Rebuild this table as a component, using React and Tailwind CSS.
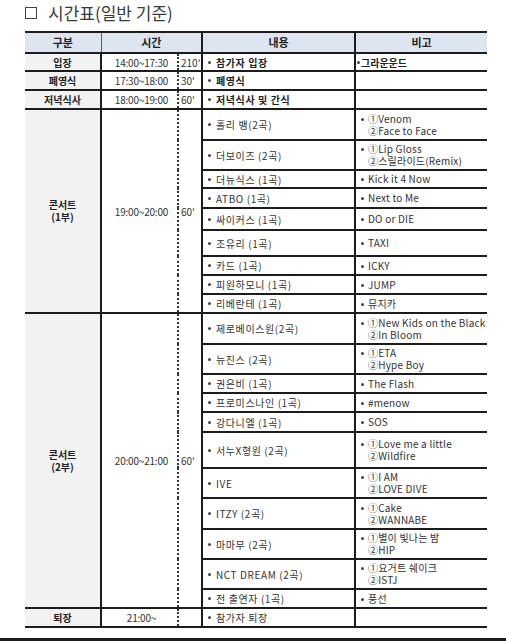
import React from 'react';

const font = { fontFamily: '"Noto Sans CJK KR", "Noto Sans", sans-serif' };

const part1 = [
  { h: 31, who: '홀리 뱅(2곡)', note: ['①Venom', '②Face to Face'] },
  { h: 30, who: '더보이즈 (2곡)', note: ['①Lip Gloss', '②스릴라이드(Remix)'] },
  { h: 18, who: '더뉴식스 (1곡)', note: ['Kick it 4 Now'] },
  { h: 20, who: 'ATBO (1곡)', note: ['Next to Me'] },
  { h: 22, who: '싸이커스 (1곡)', note: ['DO or DIE'] },
  { h: 26, who: '조유리 (1곡)', note: ['TAXI'] },
  { h: 19, who: '카드 (1곡)', note: ['ICKY'] },
  { h: 19, who: '피원하모니 (1곡)', note: ['JUMP'] },
  { h: 19, who: '리베란테 (1곡)', note: ['뮤지카'] },
];

const part2 = [
  { h: 31, who: '제로베이스원(2곡)', note: ['①New Kids on the Black', '②In Bloom'] },
  { h: 30, who: '뉴진스 (2곡)', note: ['①ETA', '②Hype Boy'] },
  { h: 19, who: '권은비 (1곡)', note: ['The Flash'] },
  { h: 19, who: '프로미스나인 (1곡)', note: ['#menow'] },
  { h: 20, who: '강다니엘 (1곡)', note: ['SOS'] },
  { h: 36, who: '서누X형원 (2곡)', note: ['①Love me a little', '②Wildfire'] },
  { h: 30, who: 'IVE', note: ['①I AM', '②LOVE DIVE'] },
  { h: 31, who: 'ITZY (2곡)', note: ['①Cake', '②WANNABE'] },
  { h: 30, who: '마마무 (2곡)', note: ['①별이 빛나는 밤', '②HIP'] },
  { h: 30, who: 'NCT DREAM (2곡)', note: ['①요거트 쉐이크', '②ISTJ'] },
  { h: 19, who: '전 출연자 (1곡)', note: ['풍선'] },
];

const line = 'border-b-2 border-b-[#1c1c1c]';
const labelCell = 'bg-[#f2f2f2] text-center font-bold text-[10px] text-[#222] border-r-2 border-r-[#1c1c1c]';
const timeCell = 'text-center text-[10px] text-[#333] tracking-[-0.2px] pl-[4px]';
const durCell = 'border-l-2 [border-left-style:dotted] border-l-[#333] text-[10px] text-[#333] pl-[2px]';
const whatCell = 'border-l-2 border-l-[#1c1c1c] border-r-2 border-r-[#1c1c1c]';

function Dot({ className = '' }) {
  return <span className={`inline-block w-[3px] h-[3px] rounded-full bg-[#444] shrink-0 ${className}`} />;
}

function Note({ lines }) {
  return (
    <div className="flex items-start pl-[5px] text-[10px] text-[#333] leading-[12px]">
      <Dot className="mt-[5px] mr-[4px]" />
      <div className="flex flex-col">
        {lines.map(l => (
          <span key={l} className="tracking-[0.2px]">{l}</span>
        ))}
      </div>
    </div>
  );
}

function Who({ text }) {
  return (
    <div className="flex items-center pl-[5px] text-[10px] text-[#333] tracking-[0.6px]">
      <Dot className="mr-[5px]" />
      {text}
    </div>
  );
}

function Section({ label, time, rows }) {
  return rows.map((r, i) => (
    <tr key={r.who} style={{ height: r.h }}>
      {i === 0 && (
        <>
          <td rowSpan={rows.length} className={`${labelCell} ${line} leading-[12px]`}>
            콘서트<br />{label}
          </td>
          <td rowSpan={rows.length} className={`${timeCell} ${line}`}>{time}</td>
          <td rowSpan={rows.length} className={`${durCell} ${line}`}>60'</td>
        </>
      )}
      <td className={`${line} ${whatCell}`}><Who text={r.who} /></td>
      <td className={line}><Note lines={r.note} /></td>
    </tr>
  ));
}

function SimpleRow({ h, label, time, dur, what, note }) {
  return (
    <tr style={{ height: h }}>
      <td className={`${labelCell} ${line}`}>{label}</td>
      <td className={`${timeCell} ${line}`}>{time}</td>
      <td className={`${durCell} ${line}`}>{dur}</td>
      <td className={`${line} ${whatCell}`}>
        <div className="flex items-center pl-[5px] text-[10px] text-[#222] font-bold tracking-[0.6px]">
          <Dot className="mr-[5px]" />
          {what}
        </div>
      </td>
      <td className={line}>
        {note && (
          <div className="flex items-center pl-[1px] text-[10px] text-[#222] font-bold">
            <Dot className="mr-[1px]" />
            {note}
          </div>
        )}
      </td>
    </tr>
  );
}

export default function App() {
  return (
    <div className="w-[506px] h-[641px] bg-white flex flex-col" style={font}>
      <div className="flex items-center h-[31px] pl-[25px] pb-[5px] text-[17px] text-[#3a3a3a]">
        <span className="w-[12px] h-[12px] border border-[#444] mr-[11px]" />
        시간표(일반 기준)
      </div>
      <table className="ml-[25px] w-[462px] border-collapse table-fixed border-t-2 border-t-[#1c1c1c]">
        <colgroup>
          <col className="w-[76px]" />
          <col className="w-[77px]" />
          <col className="w-[24px]" />
          <col className="w-[153px]" />
          <col className="w-[132px]" />
        </colgroup>
        <thead>
          <tr className="h-[21px] bg-[#dde5f1] text-[11px] font-bold text-[#222]">
            <th className={`${line} border-r border-r-[#56606e]`}>구분</th>
            <th colSpan={2} className={`${line} border-r-2 border-r-[#1c1c1c]`}>시간</th>
            <th className={`${line} border-r-2 border-r-[#1c1c1c]`}>내용</th>
            <th className={line}>비고</th>
          </tr>
        </thead>
        <tbody>
          <SimpleRow h={18} label="입장" time="14:00~17:30" dur="210'" what="참가자 입장" note="그라운운드" />
          <SimpleRow h={19} label="폐영식" time="17:30~18:00" dur="30'" what="폐영식" />
          <SimpleRow h={19} label="저녁식사" time="18:00~19:00" dur="60'" what="저녁식사 및 간식" />
          <Section label="(1부)" time="19:00~20:00" rows={part1} />
          <Section label="(2부)" time="20:00~21:00" rows={part2} />
          <tr style={{ height: 19 }}>
            <td className={`${labelCell} ${line}`}>퇴장</td>
            <td className={`${timeCell} ${line}`}>21:00~</td>
            <td className={`${durCell} ${line}`}></td>
            <td className={`${line} ${whatCell}`}><Who text="참가자 퇴장" /></td>
            <td className={line}></td>
          </tr>
        </tbody>
      </table>
      <div className="flex-1" />
      <div className="h-[3px] bg-[#1c1c1c]" />
    </div>
  );
}
